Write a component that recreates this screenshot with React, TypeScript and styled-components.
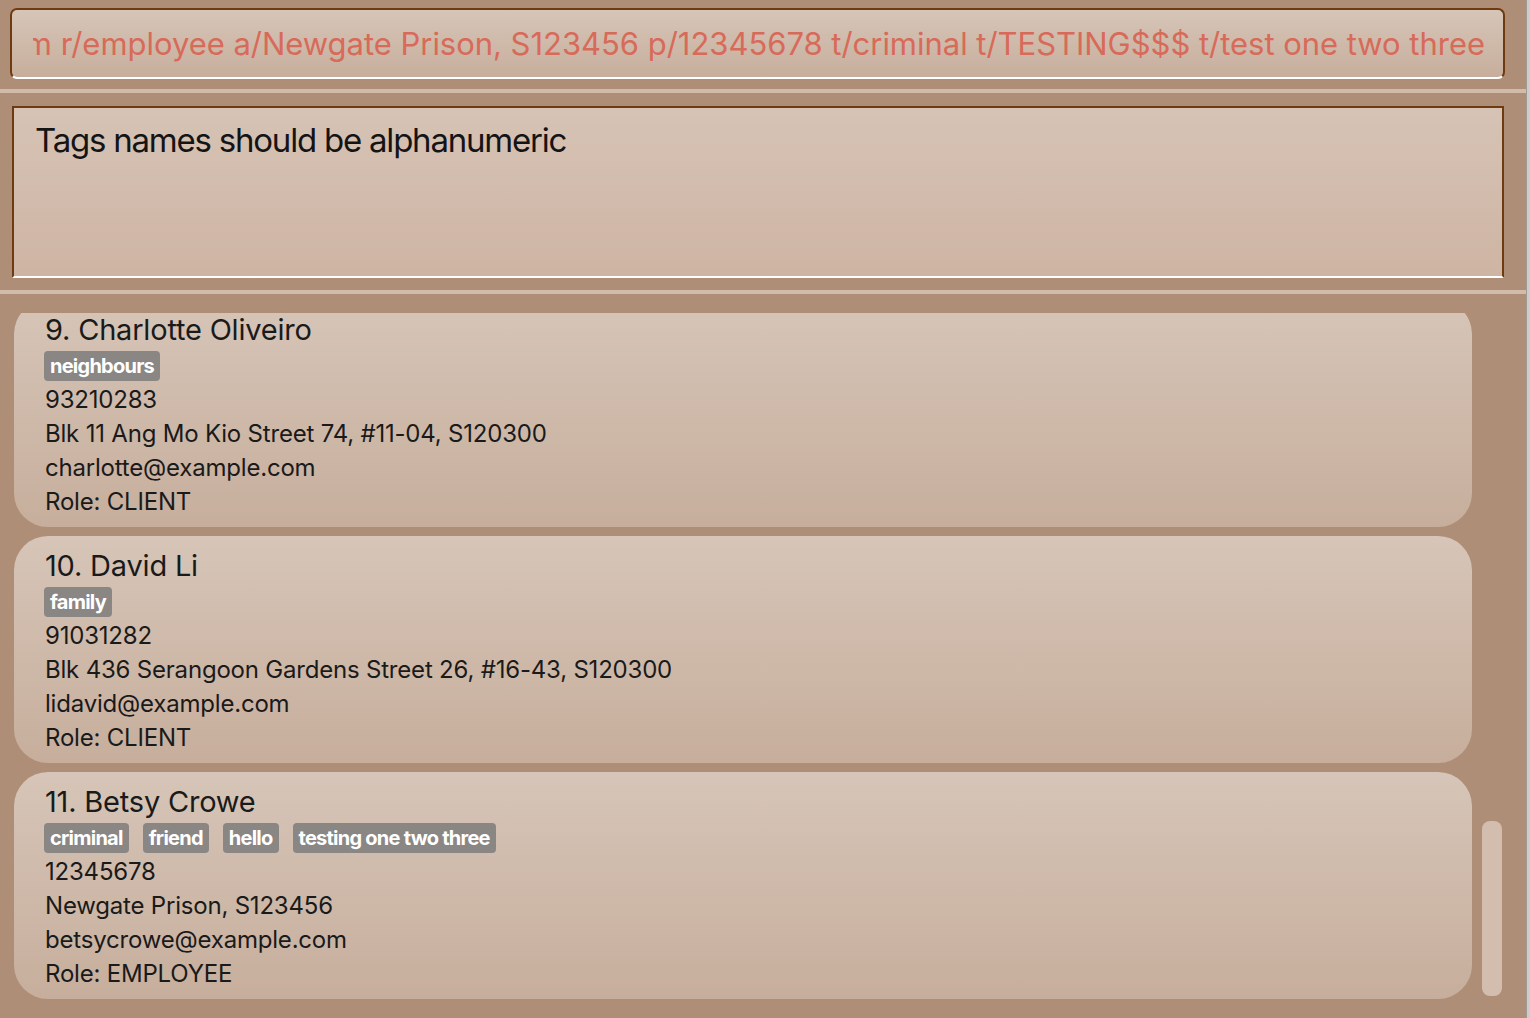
import React from "react";
import styled, { createGlobalStyle } from "styled-components";

const GlobalStyle = createGlobalStyle`
  html, body {
    margin: 0;
    padding: 0;
    height: 100%;
    overflow: hidden;
    background: #ae8e76;
  }
  #root { height: 100%; }
  * { box-sizing: border-box; }
`;

const Window = styled.div`
  display: flex;
  flex-direction: row;
  width: 1530px;
  height: 1018px;
  font-family: Inter, "Open Sans", "Liberation Sans", sans-serif;
`;

const Main = styled.div`
  flex: 1;
  display: flex;
  flex-direction: column;
  background: #ae8e76;
  min-width: 0;
`;

const EdgeStrip = styled.div`
  width: 4px;
  background: #cfcdcb;
  border-left: 1px solid #a09a95;
`;

const CommandPane = styled.div`
  padding: 8px 21px 10px 10px;
`;

const CommandBox = styled.div`
  height: 71px;
  display: flex;
  align-items: center;
  border: 2px solid #6e3a10;
  border-bottom-color: #ffffff;
  border-radius: 7px;
  background: linear-gradient(to bottom, #d6c5b8, #c7ae9c);
  padding: 0 18px 0 21px;
`;

const CommandViewport = styled.div`
  flex: 1;
  min-width: 0;
  display: flex;
  justify-content: flex-end;
  overflow: hidden;
`;

const CommandText = styled.span`
  white-space: nowrap;
  font-size: 31px;
  color: #d86a59;
  letter-spacing: -0.03px;
`;

const Divider = styled.div`
  height: 4px;
  background: #d1bcac;
`;

const ResultPane = styled.div`
  padding: 13px 22px 12px 12px;
`;

const ResultBox = styled.div`
  height: 172px;
  border: 2px solid #6e3a10;
  border-bottom-color: #ffffff;
  background: linear-gradient(to bottom, #d6c3b5, #ceb4a3);
  padding: 12px 21px;
`;

const ResultText = styled.div`
  font-size: 33px;
  color: #141414;
  letter-spacing: -1.22px;
`;

const ListPane = styled.div`
  flex: 1;
  min-height: 0;
  display: flex;
  flex-direction: row;
  padding-top: 19px;
`;

const CardColumn = styled.div`
  flex: 1;
  min-height: 0;
  display: flex;
  flex-direction: column;
  justify-content: flex-end;
  gap: 9px;
  overflow: hidden;
  padding: 0 0 19px 14px;
`;

const Card = styled.div`
  flex: none;
  height: 227px;
  border-radius: 34px;
  background: linear-gradient(to bottom, #d6c5b8, #c7ae9c);
  padding: 13px 31px 0 31px;
  display: flex;
  flex-direction: column;
  color: #1a1a1a;
`;

const Name = styled.div`
  font-size: 29px;
  line-height: 34px;
  letter-spacing: -0.2px;
`;

const TagRow = styled.div`
  display: flex;
  gap: 14px;
  margin: 4px 0 2px -1px;
`;

const Tag = styled.span`
  height: 30px;
  display: inline-flex;
  align-items: center;
  padding: 0 6px;
  border-radius: 4px;
  background: #898684;
  color: #ffffff;
  font-size: 20px;
  font-weight: 700;
  letter-spacing: -0.75px;
`;

const Detail = styled.div`
  font-size: 24px;
  line-height: 34px;
  letter-spacing: -0.2px;
`;

const ScrollTrack = styled.div`
  width: 54px;
  display: flex;
  flex-direction: column;
  justify-content: flex-end;
  padding: 0 24px 22px 10px;
`;

const ScrollThumb = styled.div`
  height: 175px;
  border-radius: 8px;
  background: #d2bdae;
`;

type Person = {
  index: number;
  name: string;
  tags: string[];
  phone: string;
  address: string;
  email: string;
  role: string;
};

const people: Person[] = [
  {
    index: 9,
    name: "Charlotte Oliveiro",
    tags: ["neighbours"],
    phone: "93210283",
    address: "Blk 11 Ang Mo Kio Street 74, #11-04, S120300",
    email: "charlotte@example.com",
    role: "CLIENT",
  },
  {
    index: 10,
    name: "David Li",
    tags: ["family"],
    phone: "91031282",
    address: "Blk 436 Serangoon Gardens Street 26, #16-43, S120300",
    email: "lidavid@example.com",
    role: "CLIENT",
  },
  {
    index: 11,
    name: "Betsy Crowe",
    tags: ["criminal", "friend", "hello", "testing one two three"],
    phone: "12345678",
    address: "Newgate Prison, S123456",
    email: "betsycrowe@example.com",
    role: "EMPLOYEE",
  },
];

const PersonCard = ({ p }: { p: Person }) => (
  <Card>
    <Name>
      {p.index}. {p.name}
    </Name>
    <TagRow>
      {p.tags.map((t) => (
        <Tag key={t}>{t}</Tag>
      ))}
    </TagRow>
    <Detail>{p.phone}</Detail>
    <Detail>{p.address}</Detail>
    <Detail>{p.email}</Detail>
    <Detail>Role: {p.role}</Detail>
  </Card>
);

export default function App() {
  return (
    <>
      <GlobalStyle />
      <Window>
        <Main>
          <CommandPane>
            <CommandBox>
              <CommandViewport>
                <CommandText>
                  add n/Betsy Crowe e/betsycrowe@example.com r/employee a/Newgate Prison, S123456 p/12345678 t/criminal t/TESTING$$$ t/test one two three
                </CommandText>
              </CommandViewport>
            </CommandBox>
          </CommandPane>
          <Divider />
          <ResultPane>
            <ResultBox>
              <ResultText>Tags names should be alphanumeric</ResultText>
            </ResultBox>
          </ResultPane>
          <Divider />
          <ListPane>
            <CardColumn>
              {people.map((p) => (
                <PersonCard key={p.index} p={p} />
              ))}
            </CardColumn>
            <ScrollTrack>
              <ScrollThumb />
            </ScrollTrack>
          </ListPane>
        </Main>
        <EdgeStrip />
      </Window>
    </>
  );
}
